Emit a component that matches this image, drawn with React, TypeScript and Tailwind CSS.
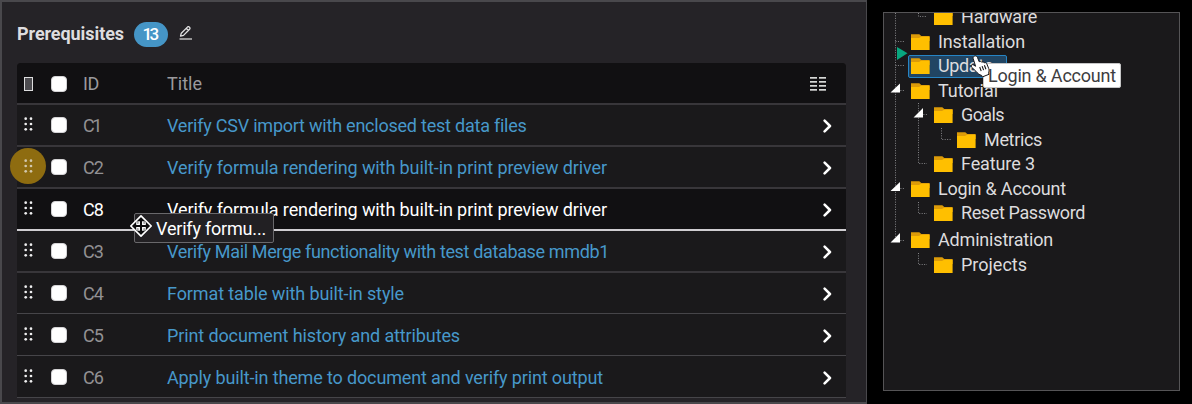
import React, { useLayoutEffect, useRef, useState } from 'react';

/** Text whose letter spacing is adjusted so that it spans a given width. */
function Label({ text, width, className = '' }: { text: string; width: number; className?: string }) {
  const ref = useRef<HTMLSpanElement>(null);
  const [spacing, setSpacing] = useState(0);
  useLayoutEffect(() => {
    const el = ref.current;
    if (!el) return;
    el.style.letterSpacing = '0px';
    const next = (width - el.getBoundingClientRect().width) / text.length;
    el.style.letterSpacing = `${next}px`;
    setSpacing(next);
  }, [text, width]);
  return (
    <span ref={ref} className={`inline-block whitespace-nowrap ${className}`} style={{ letterSpacing: spacing }}>
      {text}
    </span>
  );
}

type Row = { id: string; title: string; width: number; size: string; line: string; active?: boolean };

const rows: Row[] = [
  { id: 'C1', title: 'Verify CSV import with enclosed test data files', width: 359, size: 'h-[42px]', line: 'border-b-2 border-[#38363a]' },
  { id: 'C2', title: 'Verify formula rendering with built-in print preview driver', width: 440, size: 'h-[42px]', line: 'border-b-2 border-[#38363a]' },
  { id: 'C8', title: 'Verify formula rendering with built-in print preview driver', width: 440, size: 'h-[42px]', line: 'border-b-2 border-[#cfcdd1]', active: true },
  { id: 'C3', title: 'Verify Mail Merge functionality with test database mmdb1', width: 442, size: 'h-[42px]', line: 'border-b-2 border-[#38363a]' },
  { id: 'C4', title: 'Format table with built-in style', width: 237, size: 'h-[41px]', line: 'border-b border-[#464549]' },
  { id: 'C5', title: 'Print document history and attributes', width: 293, size: 'h-[42px]', line: 'border-b border-[#464549]' },
  { id: 'C6', title: 'Apply built-in theme to document and verify print output', width: 436, size: 'h-[42px]', line: 'border-b border-[#464549]' },
];

function Grip() {
  return (
    <svg viewBox="0 0 9 14" className="relative z-10 h-[14px] w-[9px] fill-[#efeff0]">
      {[1.7, 7, 12.3].map((y) => (
        <g key={y}>
          <circle cx="1.7" cy={y} r="1.35" />
          <circle cx="7" cy={y} r="1.35" />
        </g>
      ))}
    </svg>
  );
}

function Check() {
  return <span className="h-4 w-4 rounded-[4px] border border-[#d4d3d5] bg-white" />;
}

function MoveCursor() {
  return (
    <svg viewBox="0 0 24 24" className="absolute -left-[6px] top-0 h-6 w-6">
      <path d="M12 1.8 22.2 12 12 22.2 1.8 12Z" fill="#0b0b0c" stroke="#fff" strokeWidth="1.7" strokeLinejoin="round" />
      <g fill="none" stroke="#fff" strokeWidth="1.5">
        <path d="M10.2 7.2v3H7.2M7.2 8V7.4M13.8 7.2v3h3M10.2 16.8v-3H7.2M13.8 16.8v-3h3" />
        <path d="M7.8 10V8h2M16.2 10V8h-2M7.8 14v2h2M16.2 14v2h-2" strokeWidth="1" />
      </g>
    </svg>
  );
}

function HandCursor() {
  return (
    <svg viewBox="0 0 20 23" className="absolute left-[86px] top-[42px] z-30 h-[23px] w-5">
      <path
        d="M4.7 1C6 .6 7 1.3 7.5 2.5l1.7 4.3c.8-.7 2-.5 2.6.5.8-.7 2-.4 2.6.6.9-.6 2-.1 2.4.9l1.9 4.7c.6 1.6.3 3-.1 4.3l.4 1.5-6.6 2.6-.8-1.5c-2.5-.6-4-2.2-5.7-4.2L1.4 12c-.9-1.3.5-3 2-2.1l2.2 1.4L3.2 3.7C2.8 2.4 3.5 1.3 4.7 1Z"
        fill="#fff" stroke="#171719" strokeWidth="1"
      />
      <path d="m9.7 12 1.5 4.1M12.1 11.1l1.5 4M14.4 10.2l1.5 4" fill="none" stroke="#171719" strokeWidth="1.1" />
    </svg>
  );
}

type Node = { text: string; width: number; pad: string; selected?: boolean; gap?: string };

const nodes: Node[] = [
  { text: 'Hardware', width: 76, pad: 'pl-[50px]' },
  { text: 'Installation', width: 87, pad: 'pl-[27px]' },
  { text: 'Update', width: 55, pad: 'pl-[27px]', selected: true },
  { text: 'Tutorial', width: 60, pad: 'pl-[27px]' },
  { text: 'Goals', width: 43, pad: 'pl-[50px]' },
  { text: 'Metrics', width: 58, pad: 'pl-[73px]' },
  { text: 'Feature 3', width: 74, pad: 'pl-[50px]' },
  { text: 'Login & Account', width: 128, pad: 'pl-[27px]' },
  { text: 'Reset Password', width: 124, pad: 'pl-[50px]' },
  { text: 'Administration', width: 115, pad: 'pl-[27px]', gap: 'mt-[2.5px]' },
  { text: 'Projects', width: 66, pad: 'pl-[50px]' },
];

function Folder() {
  return (
    <svg viewBox="0 0 19 16" className="relative h-4 w-[19px] shrink-0">
      <path d="M0 .3h8.3L10.3 2H18.6v5H0Z" fill="#dc9b09" />
      <path d="M0 4h8l2.2-1.3h8.4V16H0Z" fill="#ffbf00" />
    </svg>
  );
}

function Guides() {
  return (
    <svg viewBox="0 0 70 270" className="absolute left-0 top-0 h-[270px] w-[70px]">
      <g fill="none" stroke="#858588" strokeWidth="1" strokeDasharray="1 1.45">
        <path d="M11.5 0V227M34.5 90V150.5H43M57.5 115V126.5H67M34.5 189V200.5H43M34.5 240V251.5H43M34.5 0V3.5H43M11.5 28.5H20M11.5 52.5H20M11.5 77.5H20M34.5 101.5H43M11.5 175.5H20M11.5 227.5H20" />
      </g>
      <g fill="#fff">
        <path d="M6.5 79.5 16 70.5v9ZM29.5 104.5 39 95v9.5ZM6.5 178 16 169v9ZM6.5 229.5 16 220v9.5Z" />
      </g>
      <path d="M13 34 23.5 40.3 13 47Z" fill="#08a77f" />
    </svg>
  );
}

export default function App() {
  return (
    <div className="flex h-[404px] w-[1192px] overflow-hidden bg-black font-['Roboto',sans-serif] text-[18px] leading-6">
      <section className="h-[404px] w-[867px] overflow-hidden border-2 border-r border-[#49484c] bg-[#252327] pl-[15px]">
        <header className="flex h-[61px] items-center pt-[3px]">
          <Label text="Prerequisites" width={107} className="font-bold text-[#dedddf]" />
          <span className="ml-[10px] flex h-[25px] w-[34px] items-center justify-center rounded-full bg-[#4595c6] pr-[3px] text-[17px] font-medium text-white">
            <Label text="13" width={14} />
          </span>
          <svg viewBox="0 0 14 14" className="ml-[11px] -mt-[3px] h-[14px] w-[14px] fill-none stroke-[#e2e2e3]">
            <path d="M.5 13H13" strokeWidth="1.2" />
            <path d="M1.5 10.2 2.3 7.2 8.4 1.1c.6-.6 1.6-.4 2.1.1.7.6.7 1.5.1 2.1L4.5 9.4ZM7.2 2.3l2.2 2.2" strokeWidth="1.3" strokeLinejoin="round" />
          </svg>
        </header>

        <div className="w-[829px] rounded-t-[4px] bg-[#1a191b]">
          <div className="flex h-[42px] items-center rounded-t-[4px] border-b-2 border-[#38363a] bg-[#111012] pt-[2px] text-[#9b9a9d]">
            <div className="w-[34px] pl-[7px]">
              <div className="h-[14px] w-[9px] border border-[#dededf] bg-[#4d4c50]" />
            </div>
            <div className="flex w-8 items-center"><Check /></div>
            <div className="w-[84px]"><Label text="ID" width={16} /></div>
            <Label text="Title" width={35} />
            <svg viewBox="0 0 16 14" className="ml-auto mr-5 h-[14px] w-4 fill-[#d6d8d6]">
              {[0, 4, 8, 12].map((y) => (
                <g key={y}>
                  <rect x="0" y={y} width="7" height="1.7" />
                  <rect x="9" y={y} width="7" height="1.7" />
                </g>
              ))}
            </svg>
          </div>

          {rows.map((row) => (
            <div key={row.id} className={`relative flex items-center pt-[2px] ${row.size} ${row.line} ${row.active ? 'bg-[#111012] text-white' : 'text-[#4798ca]'}`}>
              {row.id === 'C2' && <div className="absolute -left-[7px] top-[1px] z-20 h-9 w-9 rounded-full bg-[#8e6c10]" />}
              <div className={`w-[34px] pb-[4px] pl-[7px] ${row.id === 'C2' ? 'relative z-30 opacity-70' : ''}`}><Grip /></div>
              <div className="flex w-8 items-center pb-[2px]"><Check /></div>
              <div className={`w-[84px] ${row.active ? 'text-white' : 'text-[#929194]'}`}>
                <Label text={row.id} width={row.id === 'C1' ? 17 : 20} />
              </div>
              <Label text={row.title} width={row.width} />
              <svg viewBox="0 0 9 14" className="ml-auto mr-[14px] h-[14px] w-[9px] fill-none stroke-white">
                <path d="m1.6 1.6 5.4 5.4-5.4 5.4" strokeWidth="2.5" strokeLinecap="round" strokeLinejoin="round" />
              </svg>
              {row.active && (
                <div className="absolute left-[117px] top-[24px] z-30 flex h-[30px] w-[140px] items-center rounded-[2px] border border-[#69686b] bg-[#222023] pl-[21px] pt-[2px] text-white">
                  <MoveCursor />
                  <Label text="Verify formu..." width={110} />
                </div>
              )}
            </div>
          ))}
        </div>
      </section>

      <aside className="relative ml-4 mt-3 h-[379px] w-[297px] border border-[#555456] bg-[#1a191b] text-[#dddcde]">
        <div className="absolute inset-0 overflow-hidden">
          <Guides />
          <div className="-mt-[8px]">
            {nodes.map((node) => (
              <div key={node.text} className={`relative flex h-[24.5px] items-center ${node.pad} ${node.gap ?? ''}`}>
                {node.selected && <div className="absolute left-6 top-[1px] h-[23px] w-[99px] rounded-[2px] border border-[#2685c5] bg-[#214563]" />}
                <Folder />
                <Label text={node.text} width={node.width} className="relative ml-2" />
              </div>
            ))}
          </div>
        </div>
        <HandCursor />
        <div className="absolute left-[99px] top-[50px] z-20 flex h-[25px] w-[138px] items-center rounded-[2px] border border-[#c6c6c7] bg-white pl-1 text-[#3d3c40]">
          <Label text="Login & Account" width={128} />
        </div>
      </aside>
    </div>
  );
}
